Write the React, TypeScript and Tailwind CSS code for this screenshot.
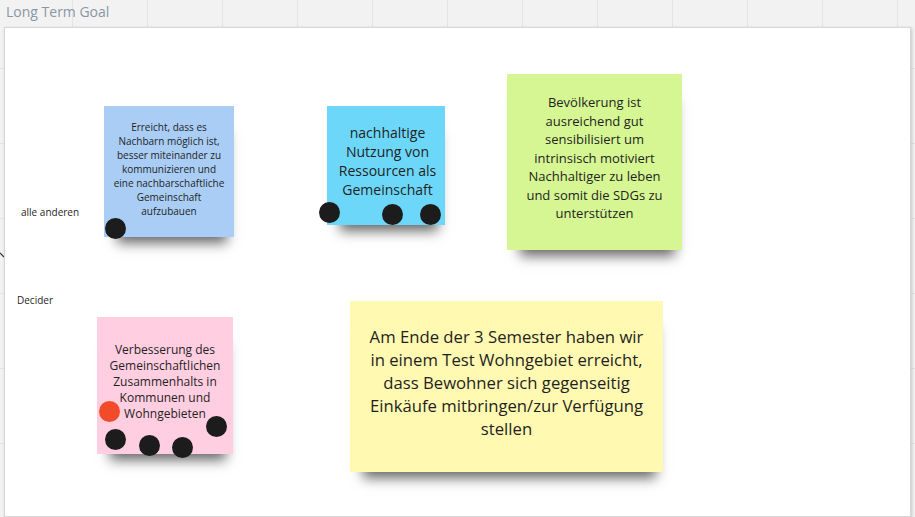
import React from "react";

type Dot = { x: number; y: number; red?: boolean };

type Note = {
  left: number;
  top: number;
  w: number;
  h: number;
  bg: string;
  text: string[];
  textClass: string;
  dots: Dot[];
};

const notes: Note[] = [
  {
    left: 99,
    top: 78,
    w: 130,
    h: 131,
    bg: "bg-[#a9cdf5]",
    text: [
      "Erreicht, dass es",
      "Nachbarn möglich ist,",
      "besser miteinander zu",
      "kommunizieren und",
      "eine nachbarschaftliche",
      "Gemeinschaft",
      "aufzubauen",
    ],
    textClass: "pt-[14px] text-[10px] leading-[14px]",
    dots: [{ x: 1, y: 112 }],
  },
  {
    left: 322,
    top: 78,
    w: 118,
    h: 119,
    bg: "bg-[#6dd7f9]",
    text: ["nachhaltige", "Nutzung von", "Ressourcen als", "Gemeinschaft"],
    textClass: "pt-[17px] text-[14px] leading-[19px] pl-[3px]",
    dots: [
      { x: -8, y: 96 },
      { x: 55, y: 98 },
      { x: 93, y: 98 },
    ],
  },
  {
    left: 502,
    top: 46,
    w: 175,
    h: 176,
    bg: "bg-[#d5f692]",
    text: [
      "Bevölkerung ist",
      "ausreichend gut",
      "sensibilisiert um",
      "intrinsisch motiviert",
      "Nachhaltiger zu leben",
      "und somit die SDGs zu",
      "unterstützen",
    ],
    textClass: "pt-[19px] text-[13px] leading-[18.5px]",
    dots: [],
  },
  {
    left: 92,
    top: 289,
    w: 136,
    h: 137,
    bg: "bg-[#ffcee0]",
    text: [
      "Verbesserung des",
      "Gemeinschaftlichen",
      "Zusammenhalts in",
      "Kommunen und",
      "Wohngebieten",
    ],
    textClass: "pt-[25px] text-[12px] leading-[16px]",
    dots: [
      { x: 2, y: 84, red: true },
      { x: 8, y: 112 },
      { x: 42, y: 118 },
      { x: 75, y: 120 },
      { x: 109, y: 99 },
    ],
  },
  {
    left: 345,
    top: 273,
    w: 313,
    h: 171,
    bg: "bg-[#fff9b1]",
    text: [
      "Am Ende der 3 Semester haben wir",
      "in einem Test Wohngebiet erreicht,",
      "dass Bewohner sich gegenseitig",
      "Einkäufe mitbringen/zur Verfügung",
      "stellen",
    ],
    textClass: "pt-[24px] text-[16.7px] leading-[23px]",
    dots: [],
  },
];

function Sticky({ note }: { note: Note }) {
  return (
    <div
      className={`absolute ${note.bg} shadow-[3px_16px_12px_-10px_rgba(0,0,0,0.6)]`}
      style={{ left: note.left, top: note.top, width: note.w, height: note.h }}
    >
      <div className={`flex flex-col items-center text-center text-[#1f1f1f] ${note.textClass}`}>
        {note.text.map((line, i) => (
          <span key={i} className="whitespace-nowrap">
            {line}
          </span>
        ))}
      </div>
      {note.dots.map((d, i) => (
        <div
          key={i}
          className={`absolute w-[21px] h-[21px] rounded-full ${d.red ? "bg-[#f24b2a]" : "bg-[#1c1c1c]"}`}
          style={{ left: d.x, top: d.y }}
        />
      ))}
    </div>
  );
}

export default function App() {
  return (
    <div
      className="w-[915px] h-[517px] overflow-hidden bg-[#f2f2f2] bg-[linear-gradient(to_right,#e4e4e4_1px,transparent_1px),linear-gradient(to_bottom,#e4e4e4_1px,transparent_1px)] bg-[size:75px_75px] bg-[position:72px_-7px] relative"
      style={{ fontFamily: '"Open Sans", "Noto Sans", sans-serif' }}
    >
      {/* Frame title */}
      <div className="h-[27px] pl-[6px] pt-[2px] text-[14px] leading-[20px] text-[#8896a5]">
        Long Term Goal
      </div>

      {/* tiny connector stub at left edge */}
      <svg className="absolute left-0 top-[252px]" width="5" height="6" viewBox="0 0 5 6">
        <path d="M0 1 L4 5" stroke="#333" strokeWidth="1.2" fill="none" />
      </svg>

      {/* Frame */}
      <div className="relative ml-[4px] w-[907px] h-[490px] bg-white border border-[#d6d6d6] shadow-[1px_1px_3px_rgba(0,0,0,0.18)]">
        <span className="absolute left-[16px] top-[177px] text-[10px] leading-[14px] text-[#1f1f1f]">
          alle anderen
        </span>
        <span className="absolute left-[12px] top-[265px] text-[10px] leading-[14px] text-[#1f1f1f]">
          Decider
        </span>
        {notes.map((n, i) => (
          <Sticky key={i} note={n} />
        ))}
      </div>
    </div>
  );
}
